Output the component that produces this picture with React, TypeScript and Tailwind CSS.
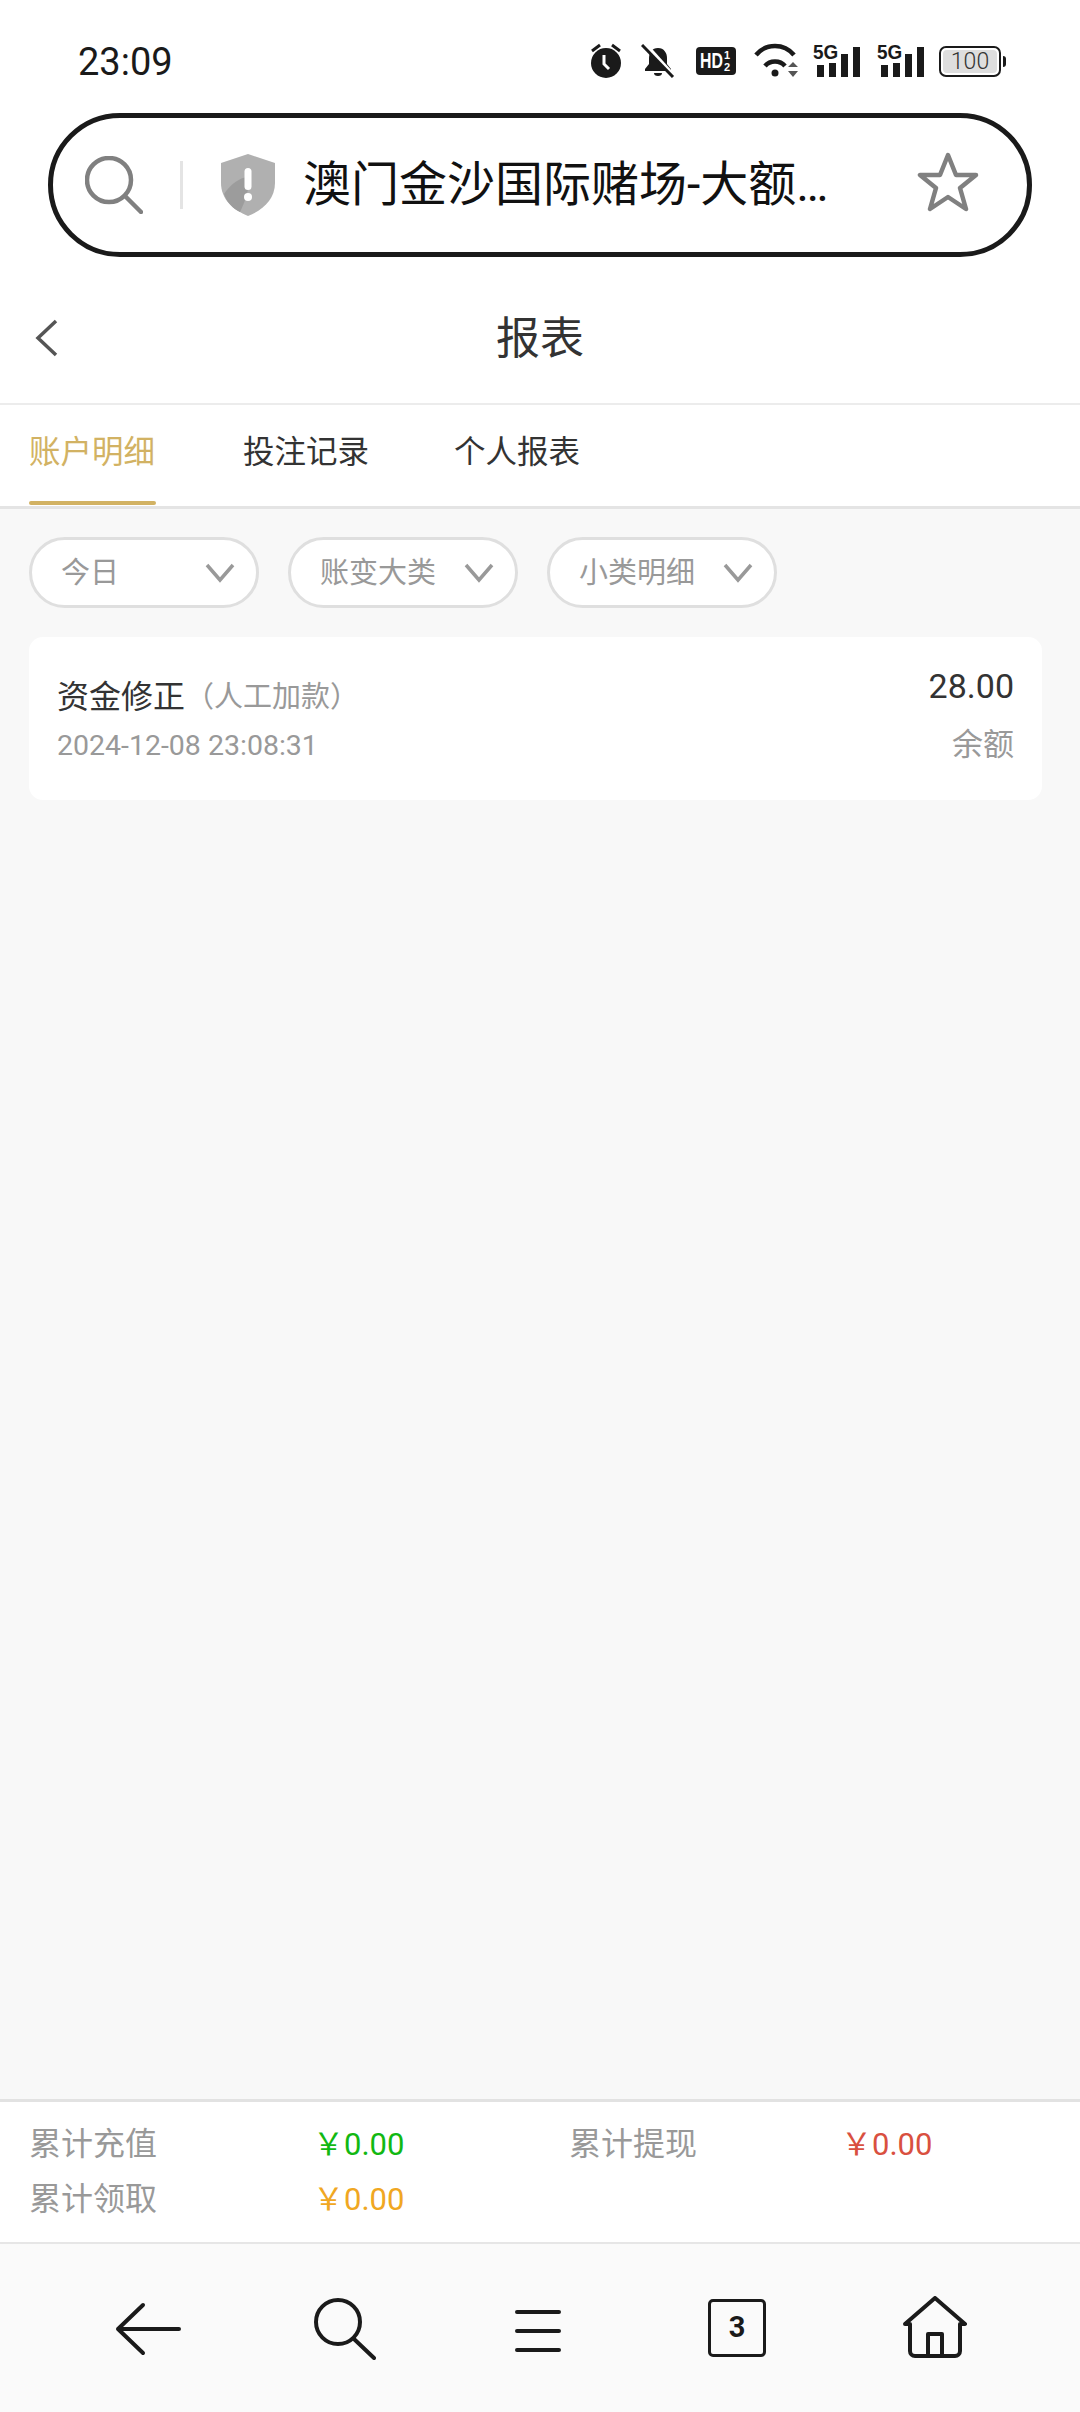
const cjk = "font-['Roboto','Noto_Sans_CJK_SC',sans-serif]";

function StatusIcons() {
  return (
    <div className="flex items-center">
      {/* alarm */}
      <svg width="34" height="36" viewBox="0 0 34 36" fill="none">
        <circle cx="17" cy="20" r="15" fill="#1a1a1a" />
        <path d="M3 8l8-6M31 8l-8-6" stroke="#1a1a1a" strokeWidth="3" />
        <path d="M15 12v9l5 5" stroke="#fff" strokeWidth="3" />
      </svg>
      {/* muted bell */}
      <svg className="ml-[18px]" width="34" height="34" viewBox="0 0 34 34" fill="none">
        <path d="M17 4c-6 0-9 5-9 10v6l-4 5v2h26v-2l-4-5v-6c0-5-3-10-9-10z" fill="#1a1a1a" />
        <path d="M13 29a4 3 0 0 0 8 0z" fill="#1a1a1a" />
        <path d="M4 0l29 32" stroke="#fff" strokeWidth="4" />
        <path d="M1 1l31 32" stroke="#1a1a1a" strokeWidth="3" />
      </svg>
      {/* HD */}
      <div className="ml-[21px] flex h-[28px] w-[40px] items-center rounded-[4px] bg-[#1a1a1a] pl-[4px] font-['Liberation_Sans',sans-serif] text-white">
        <span className="inline-block w-[24px] origin-left scale-x-[0.72] text-[22px] leading-none font-bold whitespace-nowrap">
          HD
        </span>
        <span className="flex flex-col text-center text-[11px] leading-[12px] font-bold">
          <span>1</span>
          <span>2</span>
        </span>
      </div>
      {/* wifi */}
      <svg className="ml-[18px]" width="46" height="36" viewBox="0 0 46 36" fill="none">
        <path d="M2 12C12 0 30 0 40 12" stroke="#1a1a1a" strokeWidth="4.500" />
        <path d="M11 23c5-6 15-6 20 0" stroke="#1a1a1a" strokeWidth="4.500" />
        <circle cx="21" cy="30" r="3.500" fill="#1a1a1a" />
        <path d="M34 24l5-5 5 5zM34 28l5 6 5-6z" fill="#555" />
      </svg>
      <Signal className="ml-[13px]" />
      <Signal className="ml-[17px]" />
      {/* battery */}
      <div className="ml-[15px] flex items-center">
        <div className="flex h-[31px] w-[62px] items-center justify-center rounded-[7px] border-2 border-[#1a1a1a] p-[2px]">
          <div className="flex h-full w-full items-center justify-center rounded-[4px] bg-[#dedede] font-['Roboto',sans-serif] text-[23px] leading-none font-light text-[#333]">
            100
          </div>
        </div>
        <div className="ml-[2px] h-[11px] w-[3px] rounded-r-sm bg-[#1a1a1a]" />
      </div>
    </div>
  );
}

function Signal({ className }: { className: string }) {
  return (
    <div className={`relative h-[32px] w-[47px] ${className}`}>
      <span className="absolute top-[-3px] left-0 inline-block origin-left scale-x-[0.9] font-['Liberation_Sans',sans-serif] text-[21px] leading-[20px] font-bold text-[#1a1a1a]">
        5G
      </span>
      <div className="absolute right-0 bottom-0 flex items-end gap-[5px]">
        <div className="h-[12px] w-[7px] bg-[#1a1a1a]" />
        <div className="h-[14px] w-[7px] bg-[#1a1a1a]" />
        <div className="h-[23px] w-[7px] bg-[#1a1a1a]" />
        <div className="h-[30px] w-[7px] bg-[#1a1a1a]" />
      </div>
    </div>
  );
}

function Chevron() {
  return (
    <svg width="30" height="20" viewBox="0 0 30 20" fill="none" stroke="#999" strokeWidth="3.500">
      <path d="M2 2l13 15L28 2" />
    </svg>
  );
}

function Pill({ label }: { label: string }) {
  return (
    <div className="flex h-[71px] w-[230px] items-center justify-between rounded-full border-[3px] border-[#dfdfdf] bg-white pr-[21px] pl-[29px] text-[29px] text-[#999]">
      <span className="pt-[2px]">{label}</span>
      <Chevron />
    </div>
  );
}

function Stat({ label, value, color }: { label: string; value: string; color: string }) {
  return (
    <>
      <span className="text-[32px] leading-[55px] text-[#999]">{label}</span>
      <span className={`text-[31px] leading-[55px] ${color}`}>{value}</span>
    </>
  );
}

export default function App() {
  return (
    <div className={`flex h-[2412px] w-[1080px] flex-col overflow-hidden bg-[#f8f8f8] ${cjk}`}>
      {/* Status bar */}
      <div className="flex h-[113px] shrink-0 items-start justify-between bg-white pt-[43px] pr-[74px] pl-[78px]">
        <span className="font-['Roboto',sans-serif] text-[38px] leading-[38px] text-[#1a1a1a]">23:09</span>
        <StatusIcons />
      </div>

      {/* Address bar */}
      <div className="shrink-0 bg-white px-[48px]">
        <div className="flex h-[144px] items-center rounded-full border-[5px] border-[#1a1a1a] pr-[48px] pl-[32px]">
          <svg width="58" height="58" viewBox="0 0 58 58" fill="none" stroke="#808080" strokeWidth="4.500" strokeLinecap="round">
            <circle cx="24" cy="24" r="22" />
            <path d="M40 40l16 16" />
          </svg>
          <div className="ml-[37px] h-[48px] w-[3px] bg-[#e4e4e4]" />
          <svg className="ml-[38px]" width="54" height="62" viewBox="0 0 54 62">
            <path d="M27 0l27 9v20c0 16-12 27-27 33C12 56 0 45 0 29V9z" fill="#b0b0b0" />
            <path d="M3 40c8-12 20-18 24-16 3 8-4 26-8 34C11 54 6 48 3 40z" fill="#9c9c9c" />
            <rect x="23.500" y="14" width="7" height="22" rx="3.500" fill="#fff" />
            <circle cx="27" cy="43" r="4" fill="#fff" />
          </svg>
          <span className="ml-[28px] flex-1 text-[48px] leading-none whitespace-nowrap text-[#111]">
            澳门金沙国际赌场-大额…
          </span>
          <svg className="mt-[-6px]" width="62" height="60" viewBox="0 0 62 60" fill="none" stroke="#808080" strokeWidth="4.500" strokeLinejoin="round">
            <path d="M31 3l8 20h20L43 36l6 21-18-12-18 12 6-21L3 23h20z" />
          </svg>
        </div>
      </div>

      {/* Title */}
      <div className="relative flex h-[148px] shrink-0 items-center justify-center border-b-2 border-[#ececec] bg-white pt-[18px]">
        <svg className="absolute top-[62px] left-[34px]" width="24" height="38" viewBox="0 0 24 38" fill="none" stroke="#555" strokeWidth="3.500">
          <path d="M22 2L4 19l18 17" />
        </svg>
        <span className="text-[44px] leading-none text-[#333]">报表</span>
      </div>

      {/* Tabs */}
      <div className="flex h-[104px] shrink-0 border-b-[3px] border-[#e4e4e4] bg-white px-[29px] text-[31.500px] whitespace-nowrap">
        <div className="relative flex w-[127px] items-center pb-[5px] text-[#d2b263]">
          账户明细
          <div className="absolute right-0 bottom-[1px] left-0 h-[4px] rounded-full bg-[#d2b263]" />
        </div>
        <div className="ml-[87px] flex items-center pb-[5px] text-[#333]">投注记录</div>
        <div className="ml-[85px] flex items-center pb-[5px] text-[#333]">个人报表</div>
      </div>

      {/* Content */}
      <div className="flex-1 px-[29px] pt-[28px]">
        <div className="flex gap-[29px]">
          <Pill label="今日" />
          <Pill label="账变大类" />
          <Pill label="小类明细" />
        </div>
        <div className="mt-[29px] flex h-[163px] w-[1013px] justify-between rounded-[14px] bg-white pt-[30px] pr-[28px] pl-[28px]">
          <div>
            <div className="flex items-center pt-[11px] text-[32px] leading-[38px] text-[#333]">
              资金修正<span className="text-[29px] text-[#999]">（人工加款）</span>
            </div>
            <div className="mt-[12px] text-[28.500px] leading-[36px] text-[#999]">2024-12-08 23:08:31</div>
          </div>
          <div className="text-right">
            <div className="text-[34px] leading-[38px] text-[#333]">28.00</div>
            <div className="mt-[21px] text-[31px] leading-[38px] text-[#999]">余额</div>
          </div>
        </div>
      </div>

      {/* Totals */}
      <div className="grid h-[145px] shrink-0 grid-cols-[284px_256px_272px_1fr] content-start border-t-[3px] border-b-2 border-t-[#e2e2e2] border-b-[#e6e6e6] bg-white pt-[15px] pl-[29px]">
        <Stat label="累计充值" value="￥0.00" color="text-[#12b812]" />
        <Stat label="累计提现" value="￥0.00" color="text-[#d9503f]" />
        <Stat label="累计领取" value="￥0.00" color="text-[#f0a722]" />
      </div>

      {/* Browser toolbar */}
      <div className="flex h-[168px] shrink-0 items-start bg-[#fafafa] pt-[58px] pl-[115px]">
        <svg width="66" height="54" viewBox="0 0 66 54" fill="none" stroke="#1a1a1a" strokeWidth="4" strokeLinecap="round" strokeLinejoin="round">
          <path d="M28 3L3 27l25 24M3 27h61" />
        </svg>
        <svg className="mt-[-4px] ml-[133px]" width="62" height="62" viewBox="0 0 62 62" fill="none" stroke="#1a1a1a" strokeWidth="4" strokeLinecap="round">
          <circle cx="24" cy="24" r="22" />
          <path d="M40 41l20 19" />
        </svg>
        <svg className="mt-[7px] ml-[139px]" width="46" height="44" viewBox="0 0 46 44" fill="none" stroke="#1a1a1a" strokeWidth="4" strokeLinecap="round">
          <path d="M2 3h42M2 22h42M2 41h42" />
        </svg>
        <div className="mt-[-3px] ml-[147px] flex h-[58px] w-[58px] items-center justify-center rounded-[5px] border-[3.500px] border-[#1a1a1a] font-['Roboto',sans-serif] text-[29px] font-bold text-[#1a1a1a]">
          3
        </div>
        <svg className="mt-[-6px] ml-[137px]" width="64" height="62" viewBox="0 0 64 62" fill="none" stroke="#1a1a1a" strokeWidth="4" strokeLinecap="round" strokeLinejoin="round">
          <path d="M2 28L32 2l30 26h-5v27a5 5 0 0 1-5 5H12a5 5 0 0 1-5-5V28z" />
          <path d="M25 60V38h14v22" />
        </svg>
      </div>
    </div>
  );
}
